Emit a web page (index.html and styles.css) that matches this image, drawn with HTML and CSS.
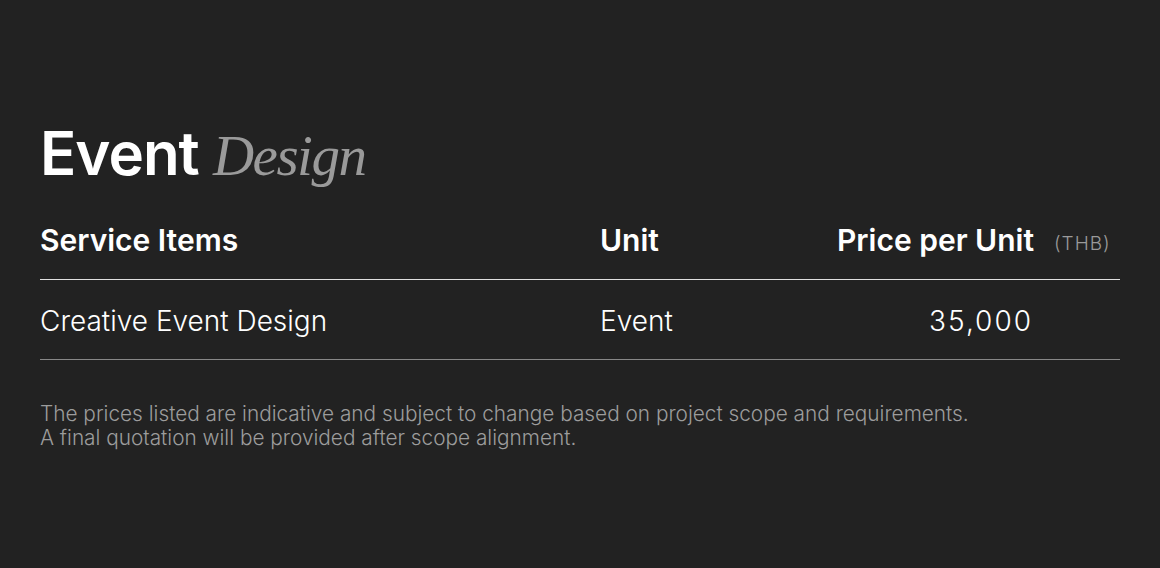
FILE: index.html
```html
<!DOCTYPE html>
<html lang="en">
<head>
<meta charset="utf-8">
<title>Event Design</title>
<link rel="stylesheet" href="styles.css">
</head>
<body>
<main class="page">
  <h1 class="title"><span class="title-main">Event</span> <span class="title-accent">Design</span></h1>
  <div class="table">
    <div class="row head">
      <div class="cell">Service Items</div>
      <div class="cell">Unit</div>
      <div class="cell price">Price per Unit</div>
      <div class="cell currency">(THB)</div>
    </div>
    <div class="row body-row">
      <div class="cell">Creative Event Design</div>
      <div class="cell">Event</div>
      <div class="cell price amount">35,000</div>
      <div class="cell currency"></div>
    </div>
  </div>
  <p class="note">The prices listed are indicative and subject to change based on project scope and requirements.<br>A final quotation will be provided after scope alignment.</p>
</main>
</body>
</html>
```

FILE: styles.css
```css
* { box-sizing: border-box; }
html, body { margin: 0; padding: 0; }
body {
  background: #222222;
  color: #ffffff;
  font-family: "Inter", "Liberation Sans", sans-serif;
  width: 1160px;
  height: 568px;
  overflow: hidden;
}
.page {
  padding: 108px 40px 0 40px;
}
.title {
  margin: 0;
  font-size: 60px;
  line-height: 90px;
  font-weight: 600;
  letter-spacing: -1px;
}
.title-main { color: #ffffff; }
.title-accent {
  font-family: "Liberation Serif", "DejaVu Serif", serif;
  font-style: italic;
  font-weight: 400;
  color: #9a9a9a;
  letter-spacing: -1.5px;
  font-size: 57px;
}
.row {
  display: grid;
  grid-template-columns: 560px 1fr auto 86px;
  align-items: center;
}
.head {
  height: 79px;
  border-bottom: 1px solid #e0e0e0;
  font-size: 30px;
  font-weight: 600;
  letter-spacing: 0;
  padding-bottom: 1px;
}
.body-row {
  height: 80px;
  border-bottom: 1px solid #888888;
  font-size: 28px;
  font-weight: 300;
  letter-spacing: 0;
  padding-top: 2px;
}
.price { text-align: right; }
.amount {
  letter-spacing: 2px;
  margin-right: 1px;
}
.currency {
  padding-left: 20px;
  font-size: 19px;
  font-weight: 300;
  color: #9a9a9a;
  letter-spacing: 1px;
  padding-top: 8px;
}
.note {
  margin: 42px 0 0 0;
  font-size: 20.8px;
  line-height: 24px;
  font-weight: 300;
  color: #9c9c9c;
  letter-spacing: 0;
}
```
